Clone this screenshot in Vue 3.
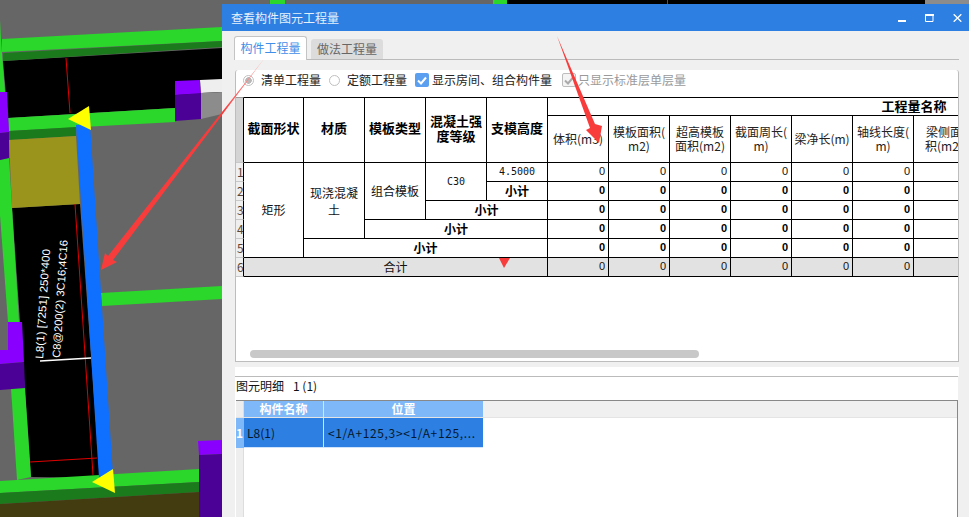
<template>
  <div class="page">
    <svg class="canvas" width="969" height="517" viewBox="0 0 969 517">
      <rect x="270" y="0" width="15" height="4" fill="#2bd72b" />
      <rect x="493" y="0" width="14" height="4" fill="#2bd72b" />
      <rect x="507" y="0" width="418" height="4" fill="#000" />
      <rect x="667" y="0" width="1" height="4" fill="#1a7a1a" />
      <rect x="925" y="0" width="44" height="4" fill="#8c8c8c" />

      <polygon points="3,61 222,48 222,110 175,108 8,118" fill="#000" />
      <polygon points="12,208 80,204 100,478 31,477" fill="#000" />
      <polygon points="2,39 222,27 222,41 2,52" fill="#2bd72b" />
      <polygon points="3,53 222,41 222,47 3,61" fill="#1b7a1b" />
      <polygon points="0,20 1,40 5,92 0,92" fill="#2bd72b" />
      <polygon points="0,160 9,158 19,322 8,322 0,215" fill="#2bd72b" />
      <polygon points="11,388 25,388 31,477 17,480" fill="#2bd72b" />
      <polygon points="8,118 175,108 175,122 9,131" fill="#2bd72b" />
      <polygon points="9,131 76,127 76,136 9,140" fill="#1b7a1b" />
      <polygon points="9,140 76,136 80,204 12,208" fill="#9a941d" />
      <polygon points="0,92 7,92 9,132 0,133" fill="#8a00ff" />
      <polygon points="0,133 9,132 9,158 0,160" fill="#4b0096" />
      <polygon points="8,322 22,322 24,362 0,364 0,350 8,350" fill="#8a00ff" />
      <polygon points="0,364 24,362 25,388 0,390" fill="#4b0096" />
      <polygon points="175,81 200,80 201,94 175,95" fill="#8a00ff" />
      <polygon points="175,95 201,93 201,119 175,121" fill="#4b0096" />
      <polygon points="200,80 222,79 222,92 201,93" fill="#eeeeee" />
      <polygon points="201,93 222,92 222,114 201,119" fill="#8c8c8c" />
      <polygon points="101,293 222,286 222,299 102,306" fill="#2bd72b" />
      <polygon points="0,481 199,469 199,482 0,493" fill="#2bd72b" />
      <polygon points="0,493 199,482 199,492 0,504" fill="#1b7a1b" />
      <polygon points="0,504 199,492 199,517 0,517" fill="#423c10" />
      <polygon points="198,441 222,440 222,454 199,455" fill="#8a00ff" />
      <polygon points="199,455 222,454 222,517 199,517" fill="#4b0096" />

      <line x1="66" y1="58" x2="70" y2="113" stroke="#e00000" />
      <line x1="75" y1="204" x2="93" y2="475" stroke="#e00000" />
      <line x1="30" y1="462" x2="97" y2="458" stroke="#e00000" />
      <line x1="40" y1="361" x2="91" y2="358" stroke="#fff" stroke-width="1.5" />
      <text class="beam-text" transform="translate(43,359) rotate(-86.3)" textLength="110" lengthAdjust="spacingAndGlyphs">L8(1) [7251] 250*400</text>
      <text class="beam-text" transform="translate(60,358) rotate(-86.3)" textLength="118" lengthAdjust="spacingAndGlyphs">C8@200(2) 3C16;4C16</text>

      <polygon points="76,125 90,124 113,475 99,478" fill="#0f6fff" />
      <polygon points="68,119 89,106 91,130" fill="#ffff00" />
      <polygon points="92,482 113,469 115,493" fill="#ffff00" />
    </svg>

    <div class="dialog">
      <div class="titlebar">
        <span class="title">查看构件图元工程量</span>
        <div class="win-btns">
          <svg width="8" height="8" viewBox="0 0 8 8"><rect x="0" y="6" width="8" height="2" fill="#fff" /></svg>
          <svg width="9" height="8" viewBox="0 0 9 8"><path d="M.5 1.5h7.5v6H.5z" fill="none" stroke="#fff" /><rect x="0" y="0" width="9" height="2" fill="#fff" /></svg>
          <svg width="9" height="8" viewBox="0 0 9 8"><path d="M.7.3l7.6 7.4M8.3.3L.7 7.7" stroke="#fff" stroke-width="1.4" /></svg>
        </div>
      </div>

      <div class="tabs">
        <div class="tab active">构件工程量</div>
        <div class="tab">做法工程量</div>
      </div>

      <div class="panel">
        <div class="panel-inner">
          <div class="options">
            <span class="radio checked"></span><span class="opt-label first">清单工程量</span>
            <span class="radio second"></span><span class="opt-label first">定额工程量</span>
            <span class="check on">
              <svg width="10" height="9" viewBox="0 0 10 9"><path d="M1 4.5l3 3 5-6" fill="none" stroke="#fff" stroke-width="2" /></svg>
            </span>
            <span class="opt-label">显示房间、组合构件量</span>
            <span class="check off">
              <svg width="10" height="9" viewBox="0 0 10 9"><path d="M1 4.5l3 3 5-6" fill="none" stroke="#aaa" stroke-width="2" /></svg>
            </span>
            <span class="opt-label muted">只显示标准层单层量</span>
          </div>

          <div class="table-wrap">
            <table class="qty">
              <colgroup>
                <col class="c-head" />
                <col class="c-first" />
                <col v-for="n in 11" :key="n" class="c-col" />
              </colgroup>
              <thead>
                <tr class="h1">
                  <th rowspan="2" class="rowhead corner"></th>
                  <th v-for="item in fixedHeads" :key="item[0]" rowspan="2" class="bold-head fixed">
                    <div v-for="line in item" :key="line">{{ line }}</div>
                  </th>
                  <th :colspan="qtyCols" class="bold-head group">工程量名称</th>
                </tr>
                <tr class="h2">
                  <th v-for="item in qtyHeads" :key="item[0]" class="qty-head">
                    <div v-for="line in item" :key="line">{{ line }}</div>
                  </th>
                </tr>
              </thead>
              <tbody>
                <tr>
                  <td class="rowhead">1</td>
                  <td rowspan="5">矩形</td>
                  <td rowspan="4" class="wrap">现浇混凝土</td>
                  <td rowspan="3">组合模板</td>
                  <td rowspan="2" class="mono">C30</td>
                  <td class="mono">4.5000</td>
                  <td v-for="n in qtyCols" :key="n" class="val">0</td>
                </tr>
                <tr class="sub">
                  <td class="rowhead">2</td>
                  <td>小计</td>
                  <td v-for="n in qtyCols" :key="n" class="val">0</td>
                </tr>
                <tr class="sub">
                  <td class="rowhead">3</td>
                  <td colspan="2">小计</td>
                  <td v-for="n in qtyCols" :key="n" class="val">0</td>
                </tr>
                <tr class="sub">
                  <td class="rowhead">4</td>
                  <td colspan="3">小计</td>
                  <td v-for="n in qtyCols" :key="n" class="val">0</td>
                </tr>
                <tr class="sub">
                  <td class="rowhead">5</td>
                  <td colspan="4">小计</td>
                  <td v-for="n in qtyCols" :key="n" class="val">0</td>
                </tr>
                <tr class="total">
                  <td class="rowhead">6</td>
                  <td colspan="5">合计</td>
                  <td v-for="n in qtyCols" :key="n" class="val">0</td>
                </tr>
              </tbody>
            </table>
          </div>

          <div class="scroll-track"><div class="scroll-thumb"></div></div>
        </div>
      </div>

      <div class="strip"></div>

      <div class="detail">
        <div class="detail-label">图元明细<span class="detail-count">1 (1)</span></div>
        <div class="grid">
          <div class="grid-row grid-head">
            <div class="g-side"></div>
            <div class="g-name">构件名称</div>
            <div class="g-pos">位置</div>
            <div class="g-rest"></div>
          </div>
          <div class="grid-row grid-data">
            <div class="g-side">1</div>
            <div class="g-name">L8(1)</div>
            <div class="g-pos">&lt;1/A+125,3&gt;&lt;1/A+125,...</div>
          </div>
          <div class="grid-fill"><div class="g-side"></div></div>
        </div>
      </div>
    </div>

    <svg class="arrows" width="969" height="517" viewBox="0 0 969 517">
      <defs>
        <linearGradient id="tailFade" gradientUnits="userSpaceOnUse" x1="267" y1="55" x2="225" y2="112">
          <stop offset="0" stop-color="#ffc4c4" />
          <stop offset="1" stop-color="#f83c3c" />
        </linearGradient>
      </defs>
      <polygon points="557,36 595,124 602,126 599,143 586,130 590,128" fill="#f83c3c" />
      <polygon points="267,55 113,260 117,262 101,270 105,253 108,256" fill="url(#tailFade)" />
      <polygon points="499,258 510,258 504,268" fill="#f83c3c" />
    </svg>
  </div>
</template>

<script setup>
const fixedHeads = [
  ["截面形状"],
  ["材质"],
  ["模板类型"],
  ["混凝土强", "度等级"],
  ["支模高度"],
];

const qtyHeads = [
  ["体积(m3)"],
  ["模板面积(", "m2)"],
  ["超高模板", "面积(m2)"],
  ["截面周长(", "m)"],
  ["梁净长(m)"],
  ["轴线长度(", "m)"],
  ["梁侧面", "积(m2)"],
];

const qtyCols = qtyHeads.length;
</script>

<style>
html,
body {
  margin: 0;
  background: #666;
}
</style>

<style scoped>
.page {
  position: relative;
  width: 969px;
  height: 517px;
  overflow: hidden;
  background: #666666;
  font-family: "Noto Sans CJK SC", "Liberation Sans", sans-serif;
  font-size: 12px;
  color: #111;
}

.canvas {
  position: absolute;
  left: 0;
  top: 0;
}

.beam-text {
  font-family: "Liberation Sans", sans-serif;
  font-size: 11px;
  fill: #fff;
}

.arrows {
  position: absolute;
  left: 0;
  top: 0;
  pointer-events: none;
}

/* 窗口 */
.dialog {
  position: absolute;
  left: 222px;
  top: 4px;
  right: 0;
  bottom: 0;
  display: flex;
  flex-direction: column;
  background: #f0f0f0;
}

.titlebar {
  flex: none;
  height: 27px;
  display: flex;
  align-items: center;
  justify-content: space-between;
  padding: 0 7px 0 9px;
  background: #2d7fe2;
  color: #e6f0fc;
  line-height: 16px;
}

.win-btns {
  display: flex;
  align-items: center;
  gap: 19px;
}

.tabs {
  flex: none;
  height: 28px;
  display: flex;
  align-items: flex-end;
  gap: 4px;
  padding-left: 12px;
}

.tab {
  box-sizing: border-box;
  width: 72px;
  height: 20px;
  border-radius: 3px 3px 0 0;
  background: #dcdcdc;
  color: #666;
  text-align: center;
  line-height: 20px;
}

.tab.active {
  width: 73px;
  height: 24px;
  margin-bottom: -1px;
  border: 1px solid #c4c4c4;
  border-bottom: none;
  background: #fff;
  color: #3f8ee8;
  line-height: 22px;
  position: relative;
  z-index: 1;
}

.panel {
  flex: none;
  box-sizing: border-box;
  width: 725px;
  height: 303px;
  margin-left: 12px;
  padding: 10px 0 0 1px;
  border-top: 1px solid #bbb;
}

.panel-inner {
  box-sizing: border-box;
  height: 292px;
  border: 1px solid #bdbdbd;
  border-top: none;
  border-radius: 3px 3px 0 0;
  background: #fff;
  display: flex;
  flex-direction: column;
}

.options {
  flex: none;
  box-sizing: border-box;
  height: 27px;
  padding: 0 0 7px 7px;
  display: flex;
  align-items: center;
  line-height: 20px;
  color: #222;
}

.radio {
  box-sizing: border-box;
  width: 11px;
  height: 11px;
  border: 1px solid #c0c0c0;
  border-radius: 50%;
  background: #fff;
}

.radio.checked {
  background: radial-gradient(circle, #b8b8b8 0 3px, #fff 3.5px);
}

.radio.second {
  margin-left: 8px;
}

.opt-label.first {
  margin-left: 7px;
}

.opt-label {
  margin-left: 3px;
}

.opt-label.muted {
  color: #9a9a9a;
  margin-left: 2px;
}

.check {
  box-sizing: border-box;
  width: 14px;
  height: 14px;
  border-radius: 2px;
  display: flex;
  align-items: center;
  justify-content: center;
  margin-left: 8px;
}

.check.on {
  background: #5a9ff0;
}

.check.off {
  margin-left: 10px;
  border: 1px solid #bdbdbd;
  background: #f4f4f4;
}

.table-wrap {
  flex: none;
  height: 180px;
  overflow: hidden;
}

.qty {
  table-layout: fixed;
  border-collapse: separate;
  border-spacing: 0;
  width: 739px;
}

.c-head {
  width: 8px;
}

.c-first {
  width: 60px;
}

.c-col {
  width: 61px;
}

.qty th,
.qty td {
  box-sizing: border-box;
  padding: 0;
  border-right: 1px solid #000;
  border-bottom: 1px solid #000;
  text-align: center;
  vertical-align: middle;
  font-weight: 400;
  line-height: 15px;
  white-space: nowrap;
  overflow: hidden;
}

.h1 th {
  border-top: 1px solid #000;
  height: 19px;
}

.h2 th {
  height: 47px;
}

.qty .bold-head {
  font-size: 13px;
  font-weight: 700;
  color: #000;
}

.qty .fixed {
  padding-bottom: 5px;
}

/* 表头文字在整列中居中，右侧列被窗口裁掉 */
.qty .group {
  padding-left: 306px;
  padding-bottom: 2px;
}

.qty .qty-head {
  color: #222;
  line-height: 14px;
}

.qty tbody tr {
  height: 19px;
}

.qty tbody td {
  height: 19px;
  padding-bottom: 1px;
  color: #111;
}

.qty td.wrap {
  white-space: normal;
  padding: 0 5px;
  line-height: 17px;
}

.qty td.mono {
  font-family: "DejaVu Sans Mono", monospace;
  font-size: 10px;
}

.qty td.val {
  text-align: right;
  padding-right: 3px;
  font-family: "Liberation Sans", sans-serif;
  font-size: 11px;
}

.qty .sub td {
  font-weight: 700;
  color: #000;
}

.qty .total td {
  background: #e2e2e2;
  font-weight: 400;
}

.qty th.rowhead,
.qty td.rowhead,
.qty .sub td.rowhead,
.qty .total td.rowhead {
  background: #efefef;
  border-bottom: 1px solid #c8c8c8;
  font-weight: 400;
  font-size: 12px;
  color: #5a4630;
  text-align: left;
  padding-left: 1px;
}

.qty th.corner {
  background: #d4d4d4;
  border-top-color: #999;
}

.scroll-track {
  flex: none;
  height: 8px;
  margin-top: 73px;
  padding-left: 14px;
}

.scroll-thumb {
  width: 449px;
  height: 8px;
  border-radius: 4px;
  background: #c8c8c8;
}

.strip {
  flex: none;
  height: 9px;
  margin: 5px 10px 0 13px;
  background: #fff;
}

.detail {
  flex: 1;
  min-height: 0;
  margin: 0 11px 0 13px;
  display: flex;
  flex-direction: column;
  border-top: 1px solid #bbb;
  background: #fff;
}

.detail-label {
  flex: none;
  height: 23px;
  padding-left: 1px;
  line-height: 18px;
  color: #111;
}

.detail-count {
  margin-left: 9px;
}

.grid {
  flex: 1;
  min-height: 0;
  margin-left: 1px;
  display: flex;
  flex-direction: column;
  border-top: 1px solid #888;
  border-right: 1px solid #888;
}

.grid-row {
  display: flex;
  flex: none;
}

.g-side {
  flex: none;
  box-sizing: border-box;
  width: 8px;
  background: #eeeeee;
  border-right: 1px solid #ddd;
}

.g-name {
  flex: none;
  box-sizing: border-box;
  width: 80px;
  border-right: 1px solid #d0e4fa;
}

.g-pos {
  flex: none;
  width: 159px;
}

.g-rest {
  flex: 1;
  background: #f0f0f0;
}

.grid-head {
  box-sizing: border-box;
  height: 17px;
  line-height: 16px;
  border-bottom: 1px solid #e4e4e4;
  font-weight: 700;
  color: #fff;
}

.grid-head .g-name,
.grid-head .g-pos {
  background: #7fb8f8;
  text-align: center;
}

.grid-data {
  height: 30px;
  line-height: 29px;
}

.grid-data .g-side {
  background: #7fb8f8;
  color: #fff;
  font-weight: 700;
  border-right: none;
}

.grid-data .g-name,
.grid-data .g-pos {
  box-sizing: border-box;
  background: #2d7fe2;
  border-bottom: 1px solid #cfe4fa;
  color: #06182c;
  padding-left: 3px;
}

.grid-data .g-pos {
  padding-left: 4px;
  letter-spacing: 0.65px;
}

.grid-fill {
  flex: 1;
  display: flex;
}
</style>
